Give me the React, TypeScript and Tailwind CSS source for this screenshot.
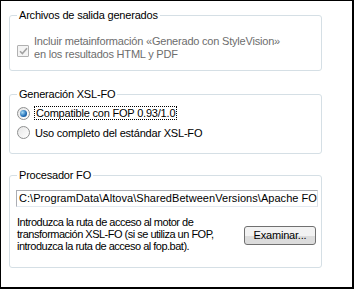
import React from "react";

function Group({ title, className, children }: { title: string; className?: string; children: React.ReactNode }) {
  return (
    <fieldset className={`ml-2 w-[313px] rounded-[3px] border border-[#d5dfe5] ${className ?? ""}`}>
      <legend className="ml-[7px] px-[2px] text-[11px] leading-[13px] tracking-[-0.2px] text-black">{title}</legend>
      {children}
    </fieldset>
  );
}

function Radio({ checked }: { checked?: boolean }) {
  return (
    <span className="flex h-[13px] w-[13px] shrink-0 items-center justify-center rounded-full border border-[#8e8f8f] bg-gradient-to-br from-[#e6e6e6] to-[#ffffff]">
      {checked && (
        <span className="h-[7px] w-[7px] rounded-full bg-[radial-gradient(circle_at_35%_35%,#a9dcf6,#1e6cb5_60%,#0c3e80)]" />
      )}
    </span>
  );
}

export default function App() {
  return (
    <div
      className="h-[289px] w-[354px] overflow-hidden border-b-2 border-l border-r-2 border-t border-black bg-white text-[11px] text-black"
      style={{ fontFamily: '"Liberation Sans", Arial, sans-serif' }}
    >
      <Group title="Archivos de salida generados" className="mt-[8px] h-[62px]">
        <div className="mt-[13px] flex items-start gap-[5px] pl-[7px] leading-[13px] text-[#6d6d6d]">
          <span className="mt-[10px] flex h-[12px] w-[12px] shrink-0 items-center justify-center rounded-[1px] border border-[#b1b1b1] bg-[#f4f4f4]">
            <svg width="9" height="8" viewBox="0 0 9 8">
              <path d="M1 4.2 L3.4 6.6 L8 1.2" fill="none" stroke="#a2a2a2" strokeWidth="1.6" />
            </svg>
          </span>
          <span className="tracking-[-0.2px]">
            Incluir metainformación «Generado con StyleVision»
            <br />
            en los resultados HTML y PDF
          </span>
        </div>
      </Group>

      <Group title="Generación XSL-FO" className="mt-[17px] h-[66px]">
        <div className="mt-[5px] flex flex-col gap-[6px] pl-[7px] tracking-[-0.2px]">
          <label className="flex items-center gap-[4px]">
            <Radio checked />
            <span className="border border-dotted border-black px-[1px] leading-[12px]">Compatible con FOP 0.93/1.0</span>
          </label>
          <label className="flex items-center gap-[5px]">
            <Radio />
            <span className="leading-[12px]">Uso completo del estándar XSL-FO</span>
          </label>
        </div>
      </Group>

      <Group title="Procesador FO" className="mt-[15px] h-[99px]">
        <div className="ml-[6px] mt-[8px] h-[17px] w-[302px] overflow-hidden whitespace-nowrap border border-[#abadb3] border-b-[#e3e9ef] border-r-[#dbdfe6] px-[2px] leading-[15px] tracking-[0.05px]">
          C:\ProgramData\Altova\SharedBetweenVersions\Apache FOP\fop.bat
        </div>
        <div className="mt-[9px] flex items-start pl-[7px] pr-[5px]">
          <p className="leading-[12px] tracking-[-0.5px]">
            Introduzca la ruta de acceso al motor de
            <br />
            transformación XSL-FO (si se utiliza un FOP,
            <br />
            introduzca la ruta de acceso al fop.bat).
          </p>
          <button className="ml-auto mt-[10px] h-[19px] w-[72px] rounded-[3px] border border-[#707070] bg-gradient-to-b from-[#f2f2f2] from-50% to-[#dcdcdc] to-50% text-[11px] leading-[17px] tracking-[-0.2px] text-black">
            Examinar...
          </button>
        </div>
      </Group>
    </div>
  );
}
